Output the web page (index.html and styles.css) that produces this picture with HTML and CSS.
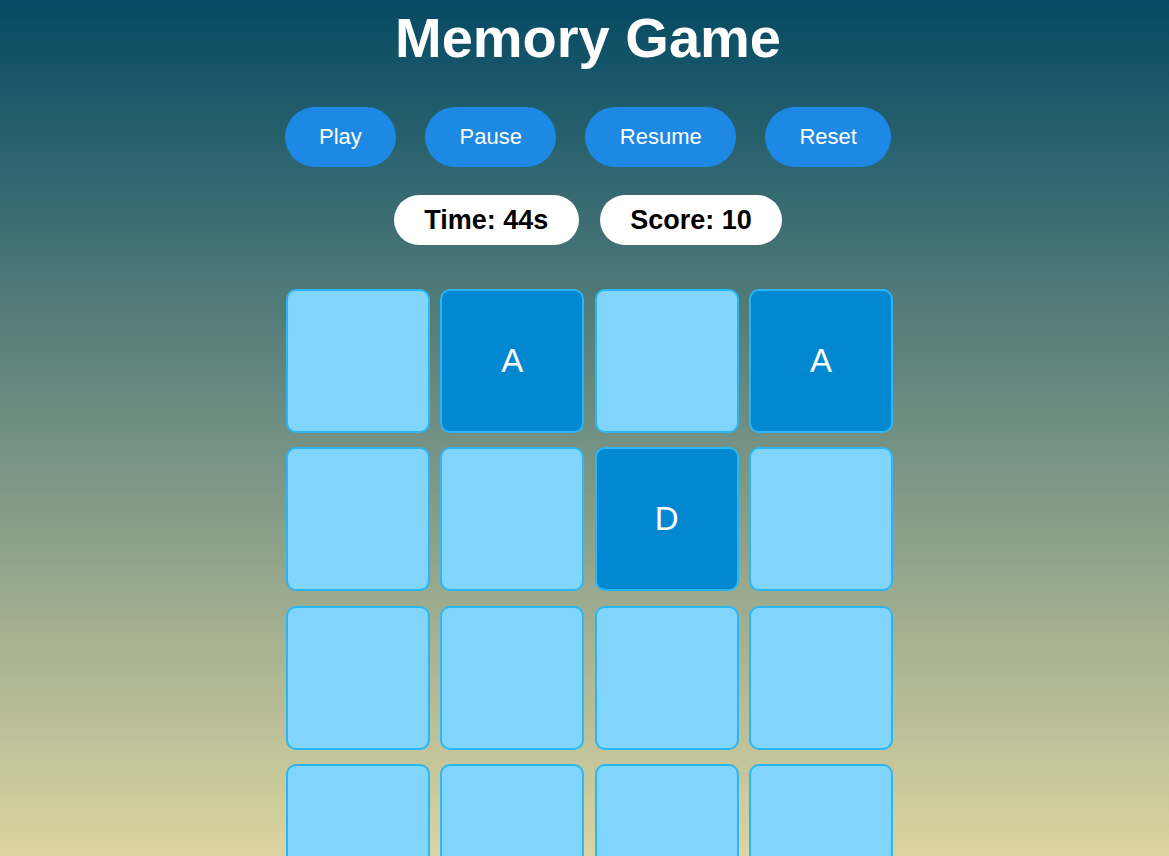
FILE: index.html
```html
<!DOCTYPE html>
<html lang="en">
<head>
<meta charset="utf-8">
<title>Memory Game</title>
<link rel="stylesheet" href="styles.css">
</head>
<body>
<div class="app">
  <h1 class="title">Memory Game</h1>
  <div class="controls">
    <button class="btn">Play</button>
    <button class="btn">Pause</button>
    <button class="btn">Resume</button>
    <button class="btn">Reset</button>
  </div>
  <div class="stats">
    <div class="pill">Time: 44s</div>
    <div class="pill">Score: 10</div>
  </div>
  <div class="board">
    <div class="card"></div>
    <div class="card flipped">A</div>
    <div class="card"></div>
    <div class="card flipped">A</div>
    <div class="card"></div>
    <div class="card"></div>
    <div class="card flipped">D</div>
    <div class="card"></div>
    <div class="card"></div>
    <div class="card"></div>
    <div class="card"></div>
    <div class="card"></div>
    <div class="card"></div>
    <div class="card"></div>
    <div class="card"></div>
    <div class="card"></div>
  </div>
</div>
</body>
</html>
```
FILE: styles.css
```css
html {
  height: 100%;
  background: linear-gradient(to bottom, #054a63 0%, #dcd4a0 100%);
}
body {
  margin: 0;
  font-family: "Liberation Sans", Arial, sans-serif;
}
.app {
  display: flex;
  flex-direction: column;
  align-items: center;
  padding-left: 7px;
}
.title {
  margin: 0;
  padding-top: 6px;
  font-size: 56px;
  line-height: 64px;
  font-weight: bold;
  color: #ffffff;
}
.controls {
  display: flex;
  gap: 29px;
  margin-top: 37px;
}
.btn {
  height: 60px;
  padding: 0 34.4px;
  border: none;
  border-radius: 30px;
  background: #1e88e5;
  color: #ffffff;
  font-family: "Liberation Sans", Arial, sans-serif;
  font-size: 22px;
  cursor: pointer;
}
.stats {
  display: flex;
  gap: 21px;
  margin-top: 28px;
}
.pill {
  height: 50px;
  padding: 0 30.4px;
  border-radius: 25px;
  background: #ffffff;
  color: #000000;
  font-size: 27px;
  font-weight: bold;
  display: flex;
  align-items: center;
}
.board {
  display: grid;
  grid-template-columns: repeat(4, 144px);
  grid-auto-rows: 144px;
  column-gap: 10.33px;
  row-gap: 14.5px;
  margin-top: 43.5px;
  padding-left: 3px;
}
.card {
  box-sizing: border-box;
  border: 2px solid #29b6f6;
  border-radius: 10px;
  background: #81d4fa;
  display: flex;
  align-items: center;
  justify-content: center;
  color: #ffffff;
  font-size: 33px;
}
.card.flipped {
  background: #0288d1;
}
```
